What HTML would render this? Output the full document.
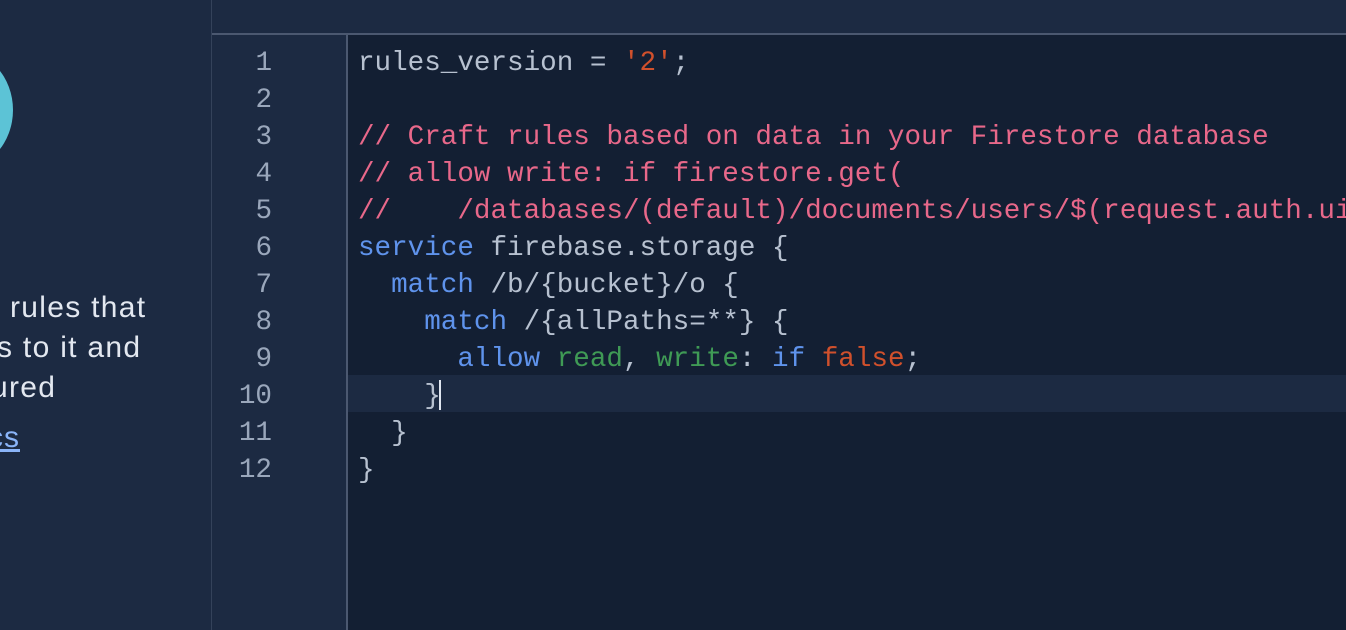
<!DOCTYPE html>
<html><head><style>
body{margin:0;width:1346px;height:630px;overflow:hidden;background:#131f33;position:relative;font-family:"Liberation Sans",sans-serif}
#left{position:absolute;left:0;top:0;width:211px;height:630px;background:#1c2a42;border-right:1px solid #34425a;overflow:hidden}
#circ{position:absolute;left:-95px;top:50px;width:108px;height:120px;border-radius:50%;background:#5cc3d6}
#txt{position:absolute;left:-3px;top:288px;color:#e3e8f0;font-size:30px;line-height:40px;white-space:nowrap;letter-spacing:1.3px}
#lnk{position:absolute;left:-12px;top:421px;color:#8ab4f8;font-size:30px;text-decoration:underline;letter-spacing:1px}
#top{position:absolute;left:212px;top:0;right:0;height:33px;background:#1c2a42;border-bottom:2px solid #4b5870}
#gut{position:absolute;left:212px;top:35px;width:134px;height:595px;background:#1c2a42;border-right:2px solid #4b5870}
.mono{font-family:"Liberation Mono",monospace;font-size:27.6px;line-height:37px}
#nums{position:absolute;left:212px;top:45px;width:60px;text-align:right;color:#9aa7bb}
#code{position:absolute;left:358px;top:45px;color:#b7c1d0;white-space:pre}
#hl{position:absolute;left:348px;top:375px;right:0;height:37px;background:#1c2a42}
.c{color:#e8688a}.k{color:#5f93ec}.s{color:#d0502c}.g{color:#3f9a55}
#cur{position:absolute;left:439px;top:380px;width:2px;height:30px;background:#e0e6f0}
</style></head><body>
<div id="left"><div id="circ"></div>
<div id="txt"><span style="margin-left:13px">rules that</span><br>s to it and<br><span style="margin-left:-6px">ured</span></div>
<div id="lnk">cs</div></div>
<div id="top"></div>
<div id="gut"></div>
<div id="hl"></div>
<div id="nums" class="mono">1<br>2<br>3<br>4<br>5<br>6<br>7<br>8<br>9<br>10<br>11<br>12</div>
<div id="code" class="mono">rules_version = <span class="s">'2'</span>;

<span class="c">// Craft rules based on data in your Firestore database</span>
<span class="c">// allow write: if firestore.get(</span>
<span class="c">//    /databases/(default)/documents/users/$(request.auth.uid</span>
<span class="k">service</span> firebase.storage {
  <span class="k">match</span> /b/{bucket}/o {
    <span class="k">match</span> /{allPaths=**} {
      <span class="k">allow</span> <span class="g">read</span>, <span class="g">write</span>: <span class="k">if</span> <span class="s">false</span>;
    }
  }
}</div>
<div id="cur"></div>
</body></html>
